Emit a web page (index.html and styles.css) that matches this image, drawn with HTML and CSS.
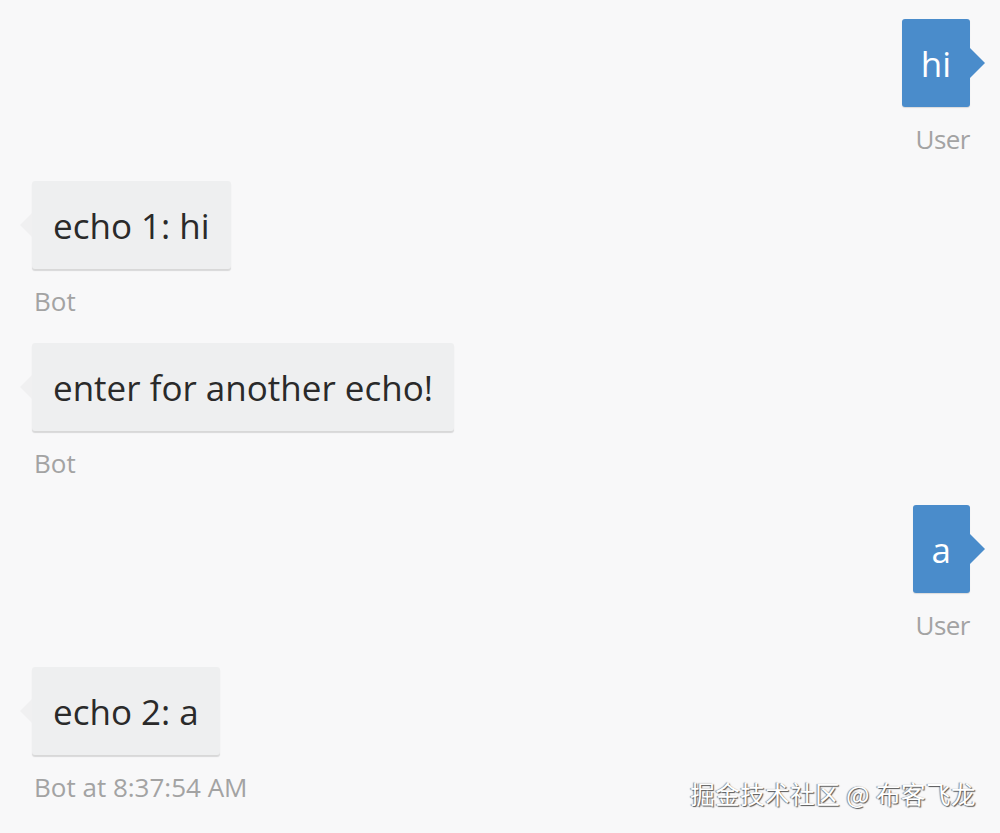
FILE: index.html
```html
<!DOCTYPE html>
<html>
<head>
<meta charset="utf-8">
<link rel="stylesheet" href="styles.css">
</head>
<body>
<div class="chat">
  <div class="msg from-user">
    <div class="bubble user">hi</div>
    <div class="label">User</div>
  </div>
  <div class="msg from-bot">
    <div class="bubble bot">echo 1: hi</div>
    <div class="label">Bot</div>
  </div>
  <div class="msg from-bot">
    <div class="bubble bot">enter for another echo!</div>
    <div class="label">Bot</div>
  </div>
  <div class="msg from-user">
    <div class="bubble user">a</div>
    <div class="label">User</div>
  </div>
  <div class="msg from-bot">
    <div class="bubble bot">echo 2: a</div>
    <div class="label">Bot at 8:37:54 AM</div>
  </div>
</div>
<div class="watermark">掘金技术社区 @ 布客飞龙</div>
</body>
</html>
```

FILE: styles.css
```css
html, body {
  margin: 0;
  padding: 0;
  background: #f8f8f9;
  height: 100%;
  overflow: hidden;
}
body {
  font-family: "Open Sans", "Noto Sans", sans-serif;
  position: relative;
}
.chat {
  display: flex;
  flex-direction: column;
  padding: 19px 30px 0 32px;
}
.msg {
  display: flex;
  flex-direction: column;
  margin-bottom: 27px;
}
.from-user { align-items: flex-end; }
.from-bot { align-items: flex-start; }
.bubble {
  position: relative;
  height: 88px;
  box-sizing: border-box;
  display: flex;
  align-items: center;
  padding: 0 21px;
  font-size: 35px;
  border-radius: 3px;
}
.bubble.user {
  padding: 0 19px;
  background: #4a8ccb;
  color: #ffffff;
  box-shadow: 0 1px 1px rgba(0,0,0,0.12);
}
.bubble.user::after {
  content: "";
  position: absolute;
  right: -15px;
  top: 44px;
  transform: translateY(-50%);
  border-left: 15px solid #4a8ccb;
  border-top: 15px solid transparent;
  border-bottom: 15px solid transparent;
}
.bubble.bot {
  background: #eeeff0;
  color: #2a2a2a;
  box-shadow: 0 2px 1px rgba(0,0,0,0.13);
}
.bubble.bot::before {
  content: "";
  position: absolute;
  left: -12px;
  top: 44px;
  transform: translateY(-50%);
  border-right: 12px solid #f0f0f1;
  border-top: 12px solid transparent;
  border-bottom: 12px solid transparent;
}
.label {
  margin-top: 17px;
  height: 30px;
  line-height: 30px;
  font-size: 26px;
  color: #a3a3a3;
}
.from-bot .label {
  padding-left: 2px;
}
.from-user .label {
  letter-spacing: -0.5px;
}
.watermark {
  position: absolute;
  right: 24px;
  bottom: 22px;
  font-family: "Noto Sans CJK SC", sans-serif;
  font-size: 24.5px;
  color: #ffffff;
  text-shadow: 1px 1px 1px #555, -1px 0 1px #888;
  letter-spacing: 0.5px;
}
```
